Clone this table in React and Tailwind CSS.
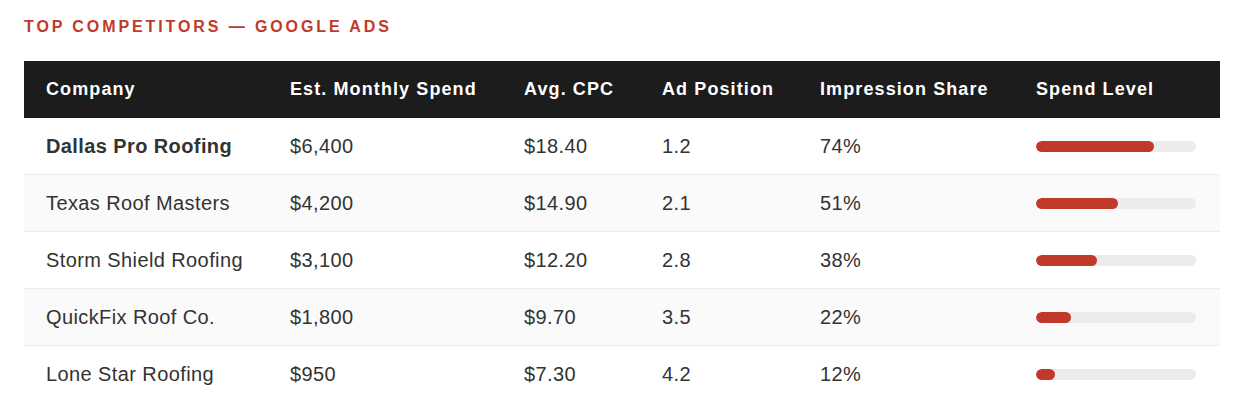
export default function App() {
  const rows = [
    { name: "Dallas Pro Roofing", spend: "$6,400", cpc: "$18.40", pos: "1.2", share: "74%", level: 74, bold: true },
    { name: "Texas Roof Masters", spend: "$4,200", cpc: "$14.90", pos: "2.1", share: "51%", level: 51 },
    { name: "Storm Shield Roofing", spend: "$3,100", cpc: "$12.20", pos: "2.8", share: "38%", level: 38 },
    { name: "QuickFix Roof Co.", spend: "$1,800", cpc: "$9.70", pos: "3.5", share: "22%", level: 22 },
    { name: "Lone Star Roofing", spend: "$950", cpc: "$7.30", pos: "4.2", share: "12%", level: 12 },
  ];
  const cols = ["w-[244px]", "w-[234px]", "w-[138px]", "w-[158px]", "w-[216px]", "w-[206px]"];
  const headers = ["Company", "Est. Monthly Spend", "Avg. CPC", "Ad Position", "Impression Share", "Spend Level"];
  return (
    <div className="bg-white px-6 pt-[17px]" style={{ fontFamily: '"Liberation Sans", Arial, sans-serif' }}>
      <h2 className="text-[16px] font-bold tracking-[2.9px] text-[#c0392b] leading-[20px] mb-[24px]">
        TOP COMPETITORS — GOOGLE ADS
      </h2>
      <div className="w-[1196px]">
        <div className="flex h-[57px] items-center bg-[#1c1c1c] text-white text-[18px] font-bold tracking-[1.1px]">
          {headers.map((h, i) => (
            <div key={h} className={`${cols[i]} pl-[22px]`}>{h}</div>
          ))}
        </div>
        {rows.map((r, idx) => (
          <div
            key={r.name}
            className={`flex h-[57px] items-center text-[20px] tracking-[0.4px] text-[#333333] border-b border-[#ebebeb] ${idx % 2 === 1 ? "bg-[#fafafa]" : "bg-white"}`}
          >
            <div className={`${cols[0]} pl-[22px] ${r.bold ? "font-bold" : ""}`}>{r.name}</div>
            <div className={`${cols[1]} pl-[22px]`}>{r.spend}</div>
            <div className={`${cols[2]} pl-[22px]`}>{r.cpc}</div>
            <div className={`${cols[3]} pl-[22px]`}>{r.pos}</div>
            <div className={`${cols[4]} pl-[22px]`}>{r.share}</div>
            <div className={`${cols[5]} pl-[22px]`}>
              <div className="w-[160px] h-[11px] rounded-full bg-[#ececec] overflow-hidden">
                <div className="h-full rounded-full bg-[#c0392b]" style={{ width: `${r.level}%` }} />
              </div>
            </div>
          </div>
        ))}
      </div>
    </div>
  );
}
